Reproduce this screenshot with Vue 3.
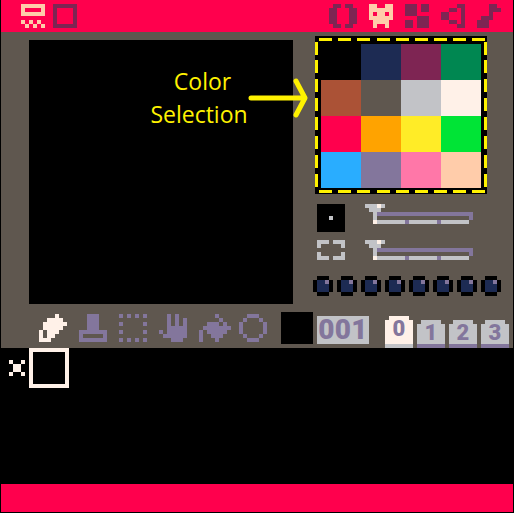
<script setup>
import { h } from 'vue'

// pico-8 colours, keyed by the letters used in the pixel rows below
const colors = {
  k: '#000000',
  n: '#1d2b53',
  m: '#7e2553',
  g: '#c2c3c7',
  w: '#fff1e8',
  p: '#83769c',
  c: '#ffccaa',
}

// draws rows of letters as 4px squares, '.' stays empty
const PixelIcon = (props) => {
  const rects = []
  props.rows.forEach((row, y) => {
    ;[...row].forEach((ch, x) => {
      if (ch === '.') return
      rects.push(
        h('rect', { x: x * 4, y: y * 4, width: 4, height: 4, fill: colors[ch] })
      )
    })
  })
  const w = props.rows[0].length * 4
  const ht = props.rows.length * 4
  return h('svg', { width: w, height: ht, viewBox: `0 0 ${w} ${ht}`, 'shape-rendering': 'crispEdges' }, rects)
}
PixelIcon.props = ['rows']

const modeIcons = [
  ['.mm.mm.', 'mm...mm', 'mm...mm', 'mm...mm', 'mm...mm', '.mm.mm.'],
  ['cc..cc', 'cccccc', 'c.cc.c', 'cccccc', '.cccc.', '.c..c.'],
  ['mmm.mm', 'mmm.mm', 'mmm...', '...mmm', 'mm.mmm', 'mm.mmm'],
  ['....mm', '..mm.m', 'mm...m', 'mm...m', '..mm.m', '....mm'],
  ['...mm.', '...mmm', '...m..', '.mmm..', 'mmm...', 'mmm...'],
]

const saveIcon = ['cccccc', 'c....c', 'cccccc', '......', 'c.c.c.', '.c.c.c']
const frameIcon = ['mmmmmm', 'm....m', 'm....m', 'm....m', 'm....m', 'mmmmmm']

const tools = [
  ['....w..', '..wwww.', '.wwwwww', '.wwwww.', 'w.www..', 'w.ww...', 'www....'],
  ['..ppp..', '..ppp..', '..ppp..', '..ppp..', 'ppppppp', 'p.....p', 'ppppppp'],
  ['p.p.p.p', '.......', 'p.....p', '.......', 'p.....p', '.......', 'p.p.p.p'],
  ['..p.p..', '..p.p.p', '..p.p.p', '..ppppp', 'p.ppppp', '.pppppp', '...ppp.'],
  ['....p...', '.....p..', '..ppp.p.', '.ppppppp', 'p.ppppp.', 'p..ppp..', 'p...p...'],
  ['..ppp..', '.p...p.', 'p.....p', 'p.....p', 'p.....p', '.p...p.', '..ppp..'],
]

const swatches = [
  '#000000', '#1d2b53', '#7e2553', '#008751',
  '#ab5236', '#5f574f', '#c2c3c7', '#fff1e8',
  '#ff004d', '#ffa300', '#ffec27', '#00e436',
  '#29adff', '#83769c', '#ff77a8', '#ffccaa',
]

// dashed marquee round the palette, the gaps are not quite even
const hDashes = [4, 23, 42, 62, 81, 100, 119, 138, 157]
const vDashes = [6, 24, 43, 62, 81, 100, 119, 138]

const brushDot = ['.......', '.......', '.......', '...g...']
const selectCorners = ['ggg.ggg', 'g.....g', '.......', 'g.....g', 'ggg.ggg']

const slider = [
  'gggwg......................',
  '.ggg.......................',
  '..g' + 'p'.repeat(24),
  '..g' + '.'.repeat(23) + 'p',
  '..w' + 'g'.repeat(7) + 'p' + 'g'.repeat(7) + 'p' + 'g'.repeat(7) + '.',
]

const knob = ['.kkk.', 'knnpk', 'knnnk', 'knnnk', '.kkk.']

const zoomMark = ['w..w', '.ww.', '.ww.', 'w..w']

const tabs = [0, 1, 2, 3]
</script>

<template>
  <div class="editor">
    <header class="topbar">
      <div class="topbar-group left">
        <PixelIcon :rows="saveIcon" />
        <PixelIcon :rows="frameIcon" />
      </div>
      <div class="topbar-group">
        <PixelIcon v-for="(icon, i) in modeIcons" :key="i" :rows="icon" />
      </div>
    </header>

    <section class="workspace">
      <div class="workspace-top">
        <div class="canvas"></div>
        <div class="side">
          <div class="palette">
            <div class="swatch" v-for="c in swatches" :key="c" :style="{ background: c }"></div>
            <svg class="marquee" width="172" height="158" shape-rendering="crispEdges">
              <g fill="#fff200">
                <rect v-for="x in hDashes" :key="'t' + x" :x="x" y="2" width="13" height="3" />
                <rect v-for="x in hDashes" :key="'b' + x" :x="x" y="154" width="13" height="3" />
                <rect v-for="y in vDashes" :key="'l' + y" x="0" :y="y" width="3" height="13" />
                <rect v-for="y in vDashes" :key="'r' + y" x="169" :y="y" width="3" height="13" />
              </g>
            </svg>
          </div>

          <div class="brush-row first">
            <div class="brush-box"><PixelIcon :rows="brushDot" /></div>
            <PixelIcon :rows="slider" />
          </div>
          <div class="brush-row">
            <PixelIcon :rows="selectCorners" />
            <PixelIcon :rows="slider" />
          </div>

          <div class="knobs">
            <PixelIcon v-for="n in 8" :key="n" :rows="knob" />
          </div>
        </div>
      </div>

      <div class="toolbar">
        <div class="tools">
          <PixelIcon v-for="(tool, i) in tools" :key="i" :rows="tool" />
        </div>
        <div class="current-color"></div>
        <div class="sprite-number">001</div>
        <div class="tabs">
          <div class="tab" v-for="t in tabs" :key="t" :class="{ active: t === 0 }">
            <div class="tab-cap"></div>
            <div class="tab-body">{{ t }}</div>
            <div class="tab-foot"></div>
          </div>
        </div>
      </div>
    </section>

    <section class="sheet">
      <PixelIcon class="zoom-mark" :rows="zoomMark" />
      <div class="sprite-cursor"></div>
    </section>

    <footer class="statusbar"></footer>

    <div class="note"><span class="note-first">Color</span><br />Selection</div>
    <svg class="note-arrow" width="66" height="44" fill="none" stroke="#fff200" stroke-width="5" stroke-linecap="round" stroke-linejoin="round">
      <path d="M6 20H59M51 3L60 20L51 37" />
    </svg>
  </div>
</template>

<style scoped>
.editor {
  position: relative;
  width: 512px;
  height: 513px;
  padding: 0 1px;
  background: #000;
  display: flex;
  flex-direction: column;
}

.topbar {
  height: 32px;
  box-sizing: border-box;
  padding: 4px 12px 0 20px;
  background: #ff004d;
  display: flex;
  justify-content: space-between;
  align-items: flex-start;
}

.topbar-group {
  display: flex;
  gap: 12px;
}

.topbar-group.left {
  gap: 8px;
}

.workspace {
  height: 316px;
  background: #5f574f;
}

.workspace-top {
  display: flex;
  height: 272px;
  box-sizing: border-box;
  padding: 4px 0 0 28px;
  gap: 22px;
}

.canvas {
  width: 264px;
  height: 264px;
  margin-top: 4px;
  background: #000;
}

.palette {
  position: relative;
  width: 160px;
  height: 144px;
  padding: 8px 6px 6px;
  background: #000;
  display: grid;
  grid-template-columns: repeat(4, 40px);
  grid-auto-rows: 36px;
}

.marquee {
  position: absolute;
  left: 0;
  top: 0;
}

.brush-row {
  display: flex;
  align-items: flex-start;
  gap: 20px;
  margin: 8px 0 0 2px;
}

.brush-row.first {
  margin-top: 10px;
}

.brush-box {
  width: 28px;
  height: 28px;
  background: #000;
}

.knobs {
  display: flex;
  gap: 4px;
  margin: 16px 0 0 -2px;
}

.knobs svg,
.brush-row svg,
.topbar svg,
.tools svg {
  display: block;
}

.toolbar {
  display: flex;
  align-items: flex-start;
  height: 44px;
  padding-left: 38px;
}

.tools {
  display: grid;
  grid-auto-flow: column;
  grid-auto-columns: 40px;
  margin-top: 10px;
}

.current-color {
  width: 32px;
  height: 32px;
  margin: 8px 0 0 2px;
  background: #000;
}

.sprite-number {
  width: 52px;
  height: 28px;
  margin: 12px 0 0 4px;
  background: #c2c3c7;
  color: #83769c;
  font: 900 28px/28px Roboto, sans-serif;
  letter-spacing: 0.3px;
  text-align: center;
}

.tabs {
  display: flex;
  align-items: flex-end;
  gap: 4px;
  height: 44px;
  margin-left: 16px;
}

.tab {
  width: 28px;
}

.tab-cap {
  height: 4px;
  margin: 0 4px;
  background: #c2c3c7;
}

.tab-body {
  height: 20px;
  background: #c2c3c7;
  color: #83769c;
  font: 900 22px/18px Roboto, sans-serif;
  text-align: center;
}

.tab-foot {
  height: 4px;
  background: #83769c;
}

.tab.active .tab-cap,
.tab.active .tab-body {
  background: #fff1e8;
}

.tab.active .tab-body {
  height: 24px;
}

.tab.active .tab-foot {
  background: #c2c3c7;
}

.sheet {
  height: 136px;
  display: flex;
  align-items: flex-start;
  gap: 4px;
  padding-left: 8px;
  background: #000;
}

.zoom-mark {
  display: block;
  margin-top: 12px;
}

.sprite-cursor {
  width: 32px;
  height: 32px;
  border: 4px solid #fff1e8;
}

.statusbar {
  height: 28px;
  background: #ff004d;
}

.note {
  position: absolute;
  left: 139px;
  top: 65px;
  width: 120px;
  color: #fff200;
  font: 23px/33px "Open Sans", sans-serif;
  text-align: center;
}

.note-first {
  margin-left: 7px;
}

.note-arrow {
  position: absolute;
  left: 245px;
  top: 78px;
}
</style>

<style>
html,
body {
  background: #000;
}
</style>
